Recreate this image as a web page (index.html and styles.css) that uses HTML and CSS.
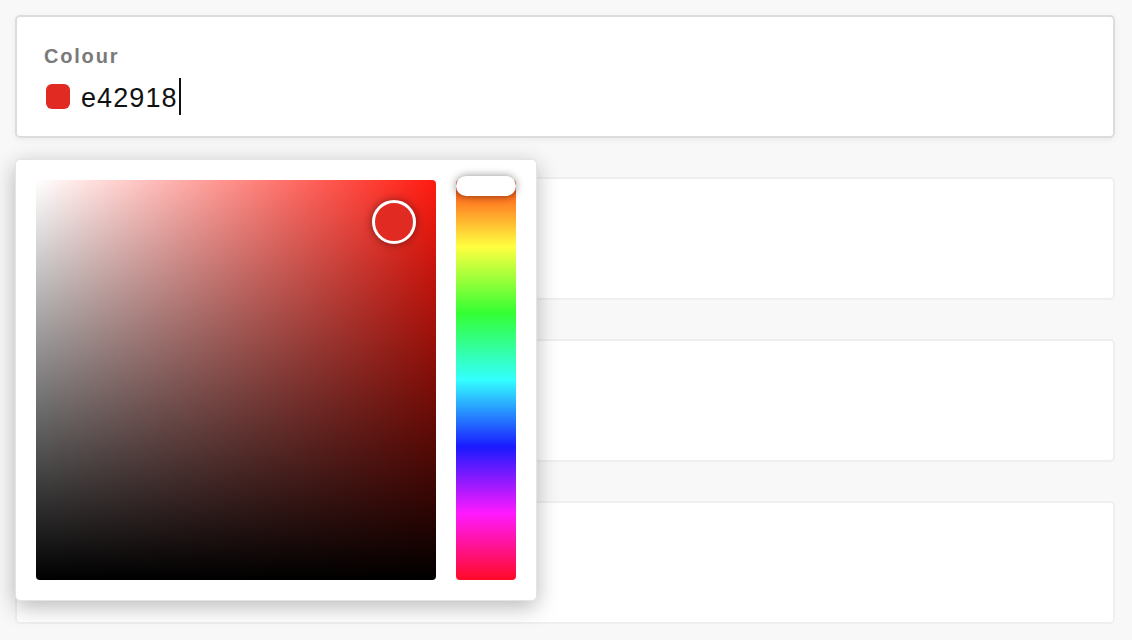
FILE: index.html
```html
<!DOCTYPE html>
<html>
<head>
<meta charset="utf-8">
<link rel="stylesheet" href="styles.css">
</head>
<body>
<div class="page">
  <div class="card card-active">
    <div class="label">Colour</div>
    <div class="value-row">
      <span class="swatch"></span>
      <span class="value">e42918</span><span class="caret"></span>
    </div>
  </div>
  <div class="card card-faded"></div>
  <div class="card card-faded"></div>
  <div class="card card-faded"></div>

  <div class="picker">
    <div class="sat">
      <div class="sat-thumb"></div>
    </div>
    <div class="hue">
      <div class="hue-thumb"></div>
    </div>
  </div>
</div>
</body>
</html>
```

FILE: styles.css
```css
html, body {
  margin: 0;
  padding: 0;
  background: #f8f8f8;
  width: 1132px;
  height: 640px;
  overflow: hidden;
  font-family: "Liberation Sans", Arial, sans-serif;
}
.page {
  position: relative;
  padding: 15px 17px 0 15px;
  display: flex;
  flex-direction: column;
  gap: 39px;
}
.card {
  height: 123px;
  background: #fff;
  border-radius: 5px;
  box-sizing: border-box;
}
.card-active {
  border: 2px solid #dcdcdc;
  box-shadow: 0 2px 6px rgba(0,0,0,0.06);
  padding: 28px 27px 0 27px;
}
.card-faded {
  border: 2px solid #efefef;
}
.label {
  font-size: 20px;
  font-weight: bold;
  color: #7a7a7a;
  letter-spacing: 1.8px;
  line-height: 22px;
}
.value-row {
  display: flex;
  align-items: center;
  margin-top: 11px;
  height: 37px;
}
.swatch {
  width: 24px;
  height: 25px;
  border-radius: 6px;
  background: #e02a22;
  margin-left: 2px;
  margin-right: 11px;
}
.value {
  font-size: 27px;
  color: #111;
  letter-spacing: 1.1px;
  margin-top: 3px;
}
.caret {
  width: 2px;
  height: 37px;
  background: #111;
  margin-left: 1px;
}
.picker {
  position: absolute;
  left: 15px;
  top: 159px;
  width: 522px;
  height: 442px;
  box-sizing: border-box;
  padding: 20px;
  background: #fff;
  border: 1px solid #e4e4e4;
  border-radius: 5px;
  box-shadow: 0 6px 22px rgba(0,0,0,0.28);
  display: flex;
  gap: 20px;
}
.sat {
  position: relative;
  width: 400px;
  height: 400px;
  border-radius: 4px;
  background:
    linear-gradient(to bottom, rgba(0,0,0,0), #000),
    linear-gradient(to right, #fff, rgba(255,255,255,0)),
    #ff1a0f;
}
.sat-thumb {
  position: absolute;
  left: 336px;
  top: 20px;
  width: 38px;
  height: 38px;
  border-radius: 50%;
  border: 3px solid #fff;
  background: #e02a22;
  box-shadow: 0 0 8px rgba(0,0,0,0.45);
}
.hue {
  position: relative;
  width: 60px;
  height: 400px;
  border-radius: 4px;
  background: linear-gradient(to bottom,
    #d42a16 0%, #ff7a22 5%, #ffff40 16.67%, #33ff33 33.33%, #33ffff 50%,
    #1a1aff 66.67%, #ff1aff 83.33%, #ff0a26 100%);
}
.hue-thumb {
  position: absolute;
  left: 0;
  top: -4px;
  width: 60px;
  height: 20px;
  border-radius: 10px;
  background: #fff;
  box-shadow: 0 0 8px rgba(0,0,0,0.45);
}
```
